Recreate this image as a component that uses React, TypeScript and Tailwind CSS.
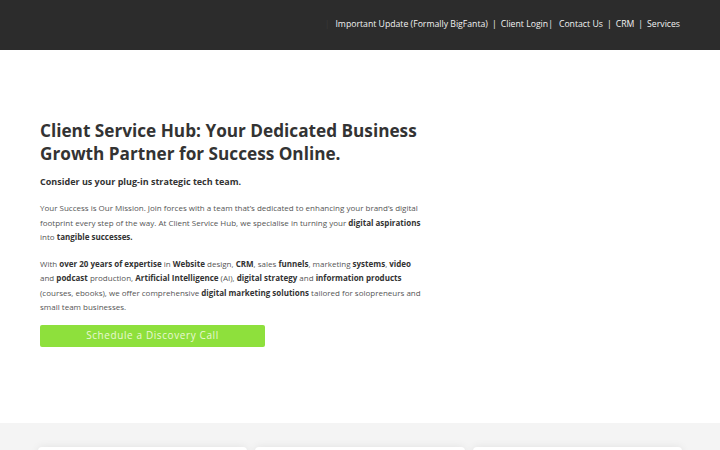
const font = { fontFamily: '"Open Sans", "Liberation Sans", sans-serif' };

function Nav() {
  const links = ["Important Update (Formally BigFanta)", "Client Login", "Contact Us", "CRM", "Services"];
  return (
    <header className="h-[50px] bg-[#2c2c2c] flex items-center justify-end pr-[40px]">
      <nav className="flex items-center text-[8.7px] text-[#f2f2f2]">
        <span className="text-[#3a3a3a] mr-[6px]">|</span>
        <span>{links[0]}</span>
        <span className="mx-[4px]">|</span>
        <span>{links[1]}</span>
        <span className="mr-[6px]">|</span>
        <span>{links[2]}</span>
        <span className="mx-[4px]">|</span>
        <span>{links[3]}</span>
        <span className="mx-[4px]">|</span>
        <span>{links[4]}</span>
      </nav>
    </header>
  );
}

function Hero() {
  return (
    <section className="bg-white px-[40px] pt-[69px] h-[373px]">
      <div className="w-[384px]">
        <h1 className="text-[17.2px] leading-[23px] font-bold text-[#333]">
          Client Service Hub: Your Dedicated Business Growth Partner for Success Online.
        </h1>
        <p className="mt-[10px] text-[9px] leading-[14px] font-bold text-[#333]">
          Consider us your plug-in strategic tech team.
        </p>
        <p className="mt-[12px] text-[8px] leading-[14.5px] text-[#555]">
          Your Success is Our Mission. Join forces with a team that’s dedicated to enhancing your brand’s digital
          footprint every step of the way. At Client Service Hub, we specialise in turning your{" "}
          <b className="text-[#333]">digital aspirations</b> into <b className="text-[#333]">tangible successes.</b>
        </p>
        <p className="mt-[12px] text-[8px] leading-[14.5px] text-[#555]">
          With <b className="text-[#333]">over 20 years of expertise</b> in <b className="text-[#333]">Website</b> design,{" "}
          <b className="text-[#333]">CRM</b>, sales <b className="text-[#333]">funnels</b>, marketing{" "}
          <b className="text-[#333]">systems</b>, <b className="text-[#333]">video</b> and{" "}
          <b className="text-[#333]">podcast</b> production, <b className="text-[#333]">Artificial Intelligence</b> (AI),{" "}
          <b className="text-[#333]">digital strategy</b> and <b className="text-[#333]">information products</b>{" "}
          (courses, ebooks), we offer comprehensive <b className="text-[#333]">digital marketing solutions</b> tailored for
          solopreneurs and small team businesses.
        </p>
        <button className="mt-[10px] w-[225px] h-[22px] rounded-[2px] bg-[#8ee03c] text-[#eaf8d6] text-[10px] tracking-[0.6px] flex items-center justify-center">
          Schedule a Discovery Call
        </button>
      </div>
    </section>
  );
}

function Cards() {
  return (
    <section className="bg-[#f4f4f4] h-[200px] pt-[24px] px-[38px]">
      <div className="grid grid-cols-3 gap-[8px]">
        {[0, 1, 2].map((i) => (
          <div key={i} className="h-[160px] bg-white rounded-[4px] shadow-[0_0_8px_rgba(0,0,0,0.08)]" />
        ))}
      </div>
    </section>
  );
}

export default function App() {
  return (
    <div style={font} className="w-[720px] h-[450px] overflow-hidden bg-white">
      <Nav />
      <Hero />
      <Cards />
    </div>
  );
}
